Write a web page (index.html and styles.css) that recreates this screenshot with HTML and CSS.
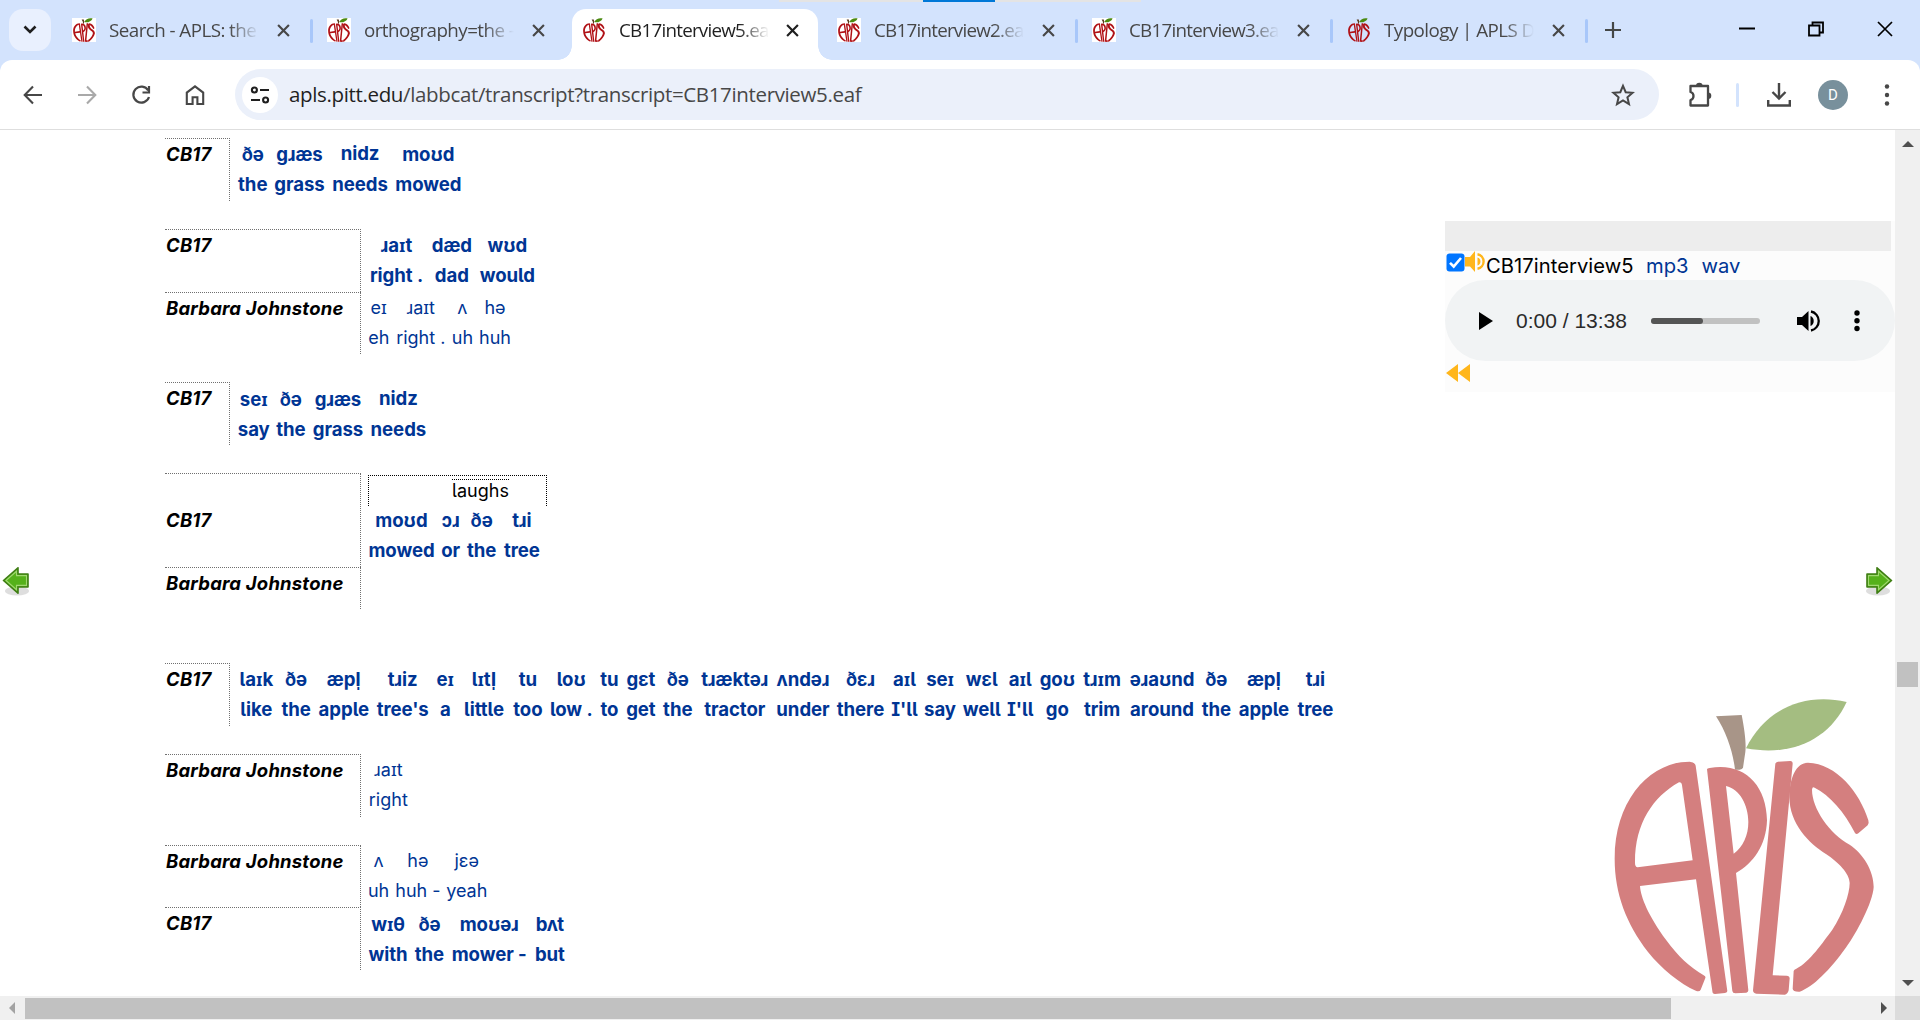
FILE: index.html
```html
<!DOCTYPE html>
<html lang="en">
<head>
<meta charset="utf-8">
<title>CB17interview5.eaf</title>
<link rel="stylesheet" href="styles.css">
</head>
<body>
<svg class="defs" width="0" height="0">
  <symbol id="apls" viewBox="70 50 786 897" preserveAspectRatio="none">
    <path class="stem" d="M379 108L456 104C465 150 470 190 467 215L460 262Q458 267 450 268L436 268C430 215 410 155 379 108Z"/>
    <path class="leaf" d="M469 204C525 90 640 35 771 65C720 175 610 230 469 204Z"/>
    <path class="fruit" fill-rule="evenodd" d="M300 244Q316 246 318 256L413 932Q413 937 406 938L376 941Q368 941 368 932L319 597L151 617C153 650 175 705 230 780C265 828 300 860 342 885Q349 888 347 893L333 928Q330 935 320 932C270 910 215 865 175 815C110 730 75 640 75 535C75 360 180 244 300 244ZM268 306C190 350 135 430 136 548Q136 560 144 561L309 540L277 315Q276 305 268 306Z"/>
    <path class="fruit" fill-rule="evenodd" d="M352 267Q352 264 360 263C460 245 530 310 532 420C530 495 490 550 439 578L476 930Q476 936 470 937L437 939Q429 939 428 932ZM409 317L432 520C460 500 476 465 476 425C476 375 450 325 409 317Z"/>
    <path class="fruit" d="M557 250Q558 245 565 244L602 242Q609 242 609 250L549 885L592 886Q600 887 600 893L597 930Q594 942 585 943L500 940Q490 939 490 930Z"/>
    <path class="fruit" d="M655 247C740 250 810 335 836 420Q839 430 834 435L806 459Q800 464 796 458C765 395 720 345 675 322Q668 318 667 328C667 385 720 460 780 493C820 520 852 570 852 620C850 665 800 760 770 800C720 870 670 920 630 934Q610 935 609 925L612 872Q613 867 620 865C660 845 700 785 728 748C760 700 780 640 780 608C780 580 745 545 710 522C655 487 600 430 599 350C600 290 620 247 655 247Z"/>
  </symbol>
  <symbol id="close" viewBox="0 0 12 12"><path d="M1 1L11 11M11 1L1 11" fill="none" stroke="currentColor" stroke-width="2"/></symbol>
  <symbol id="arrow" viewBox="0 0 28 30">
    <ellipse cx="15" cy="24" rx="12" ry="4.5" fill="#000" opacity=".13"/>
    <path d="M1.500 13.500L16 0.800V7H26V20H16V26.200Z" fill="#55b11a" stroke="#3f7d14" stroke-width="1.6" stroke-linejoin="round"/>
    <path d="M4 13.500L14.500 4.300V8.600H24.500V18.400H14.500V22.700Z" fill="none" stroke="#a0d870" stroke-width="1.1"/>
  </symbol>
</svg>

<header class="tabstrip">
  <div class="search-tabs"><svg width="14" height="10" viewBox="0 0 14 10"><path d="M1.5 1.5L7 7L12.5 1.5" fill="none" stroke="#1f1f1f" stroke-width="2.6"/></svg></div>
  <div class="tab first"><span class="fav boxed"><svg><use href="#apls"/></svg></span><span class="title">Search - APLS: the .</span><svg class="x"><use href="#close"/></svg></div>
  <div class="tab"><span class="fav boxed"><svg><use href="#apls"/></svg></span><span class="title">orthography=the -</span><svg class="x"><use href="#close"/></svg></div>
  <div class="tab active"><span class="fav"><svg><use href="#apls"/></svg></span><span class="title tight">CB17interview5.eaf</span><svg class="x"><use href="#close"/></svg></div>
  <div class="tab divided"><span class="fav boxed"><svg><use href="#apls"/></svg></span><span class="title tight">CB17interview2.eaf</span><svg class="x"><use href="#close"/></svg></div>
  <div class="tab divided"><span class="fav boxed"><svg><use href="#apls"/></svg></span><span class="title tight">CB17interview3.eaf</span><svg class="x"><use href="#close"/></svg></div>
  <div class="tab divided"><span class="fav"><svg><use href="#apls"/></svg></span><span class="title">Typology | APLS Do</span><svg class="x"><use href="#close"/></svg></div>
  <svg class="plus" width="16" height="16" viewBox="0 0 16 16"><path d="M8 0V16M0 8H16" stroke="#444746" stroke-width="2.2"/></svg>
  <div class="window-buttons">
    <svg width="16" height="16" viewBox="0 0 16 16"><path d="M0 7.5H16" stroke="#000" stroke-width="2"/></svg>
    <svg width="16" height="16" viewBox="0 0 16 16"><path d="M1 4.5H11.5V14.5H1ZM4.5 4V1.5H15V11.5H12" fill="none" stroke="#000" stroke-width="1.8"/></svg>
    <svg width="16" height="16" viewBox="0 0 16 16"><path d="M1 1L15 15M15 1L1 15" stroke="#000" stroke-width="1.7"/></svg>
  </div>
  <div class="share-bar"><i></i></div>
</header>

<nav class="toolbar">
  <svg class="tool" viewBox="0 0 20 20"><path d="M19 10H2M10 1.5L1.7 10L10 18.5" fill="none" stroke="#474747" stroke-width="2.1"/></svg>
  <svg class="tool" viewBox="0 0 20 20"><path d="M1 10H18M10 1.5L18.3 10L10 18.5" fill="none" stroke="#a9a9a9" stroke-width="2.1"/></svg>
  <svg class="tool" viewBox="0 0 20 20"><path d="M17.2 5.5A8 8 0 1 0 18 12M18 1V7.5H11.5" fill="none" stroke="#474747" stroke-width="2.2"/></svg>
  <svg class="tool" viewBox="0 0 20 20"><path d="M1.8 19V7.6L10 1.4L18.2 7.6V19H12.4V12.2H7.6V19Z" fill="none" stroke="#474747" stroke-width="2.1"/></svg>
  <div class="omnibox">
    <span class="site"><svg width="20" height="18" viewBox="0 0 20 18"><g fill="none" stroke="#1f1f1f" stroke-width="2.1"><circle cx="4.4" cy="4" r="2.5"/><path d="M10 4H19M1 14H10"/><circle cx="15.6" cy="14" r="2.5"/></g></svg></span>
    <span class="url"><b>apls.pitt.edu</b>/labbcat/transcript?transcript=CB17interview5.eaf</span>
    <svg class="star" width="24" height="24" viewBox="0 0 24 24"><path d="M12 2.8L14.7 9.2L21.6 9.8L16.4 14.3L18 21.1L12 17.5L6 21.1L7.6 14.3L2.4 9.8L9.3 9.2Z" fill="none" stroke="#474747" stroke-width="2"/></svg>
  </div>
  <svg class="ext" width="28" height="28" viewBox="0 0 28 28"><path d="M4.5 5H22V24.5H4.5V19C8.5 18 8.5 12 4.5 11Z" fill="none" stroke="#474747" stroke-width="2.3" stroke-linejoin="round"/><path d="M10 5A3.3 3.3 0 0 1 16.600 5ZM22 11.500A3.300 3.300 0 0 1 22 18.100Z" fill="#474747"/></svg>
  <i class="sep"></i>
  <svg class="download" width="26" height="26" viewBox="0 0 26 26"><path d="M13 1V16M6.500 10L13 16.500L19.500 10M2.200 18V23.500H23.800V18" fill="none" stroke="#474747" stroke-width="2.4"/></svg>
  <span class="avatar">D</span>
  <svg class="menu" width="6" height="24" viewBox="0 0 6 24"><g fill="#474747"><circle cx="3" cy="3.500" r="2.200"/><circle cx="3" cy="12" r="2.200"/><circle cx="3" cy="20.500" r="2.200"/></g></svg>
</nav>

<div class="frame">
<main class="page">
  <section class="transcript">
    <div class="utterance narrow">
      <div class="turn loud"><div class="speaker">CB17</div><div class="words">
        <div style="width:35.5px"><i>ðə</i><b>the</b></div><div style="width:58px"><i>ɡɹæs</i><b>grass</b></div><div style="width:63.2px"><i class="up">nidz</i><b>needs</b></div><div style="width:73.3px"><i>moʊd</i><b>mowed</b></div>
      </div></div>
    </div>
    <div class="utterance">
      <div class="turn loud"><div class="speaker">CB17</div><div class="words">
        <div style="width:63px"><i>ɹaɪt</i><b>right .</b></div><div style="width:47.7px"><i>dæd</i><b>dad</b></div><div style="width:63.3px"><i>wʊd</i><b>would</b></div>
      </div></div>
      <div class="turn"><div class="speaker">Barbara Johnstone</div><div class="words">
        <div style="width:27.5px"><i>eɪ</i><b>eh</b></div><div style="width:56.5px"><i>ɹaɪt</i><b>right .</b></div><div style="width:26.8px"><i>ʌ</i><b>uh</b></div><div style="width:38.5px"><i>hə</i><b>huh</b></div>
      </div></div>
    </div>
    <div class="utterance narrow">
      <div class="turn loud"><div class="speaker">CB17</div><div class="words">
        <div style="width:37.5px"><i>seɪ</i><b>say</b></div><div style="width:36.7px"><i>ðə</i><b>the</b></div><div style="width:57.6px"><i>ɡɹæs</i><b>grass</b></div><div style="width:63.2px"><i class="up">nidz</i><b>needs</b></div>
      </div></div>
    </div>
    <div class="utterance">
      <div class="turn loud tall"><div class="speaker">CB17</div><div>
        <div class="noise"><span>laughs</span></div>
        <div class="words">
          <div style="width:73px"><i>moʊd</i><b>mowed</b></div><div style="width:25.3px"><i>ɔɹ</i><b>or</b></div><div style="width:36.7px"><i>ðə</i><b>the</b></div><div style="width:43.7px"><i>tɹi</i><b>tree</b></div>
        </div>
      </div></div>
      <div class="turn empty"><div class="speaker">Barbara Johnstone</div><div class="words"></div></div>
    </div>
    <div class="utterance narrow">
      <div class="turn loud"><div class="speaker">CB17</div><div class="words">
        <div style="width:42.7px"><i>laɪk</i><b>like</b></div><div style="width:36.8px"><i>ðə</i><b>the</b></div><div style="width:58.7px"><i>æpl̩</i><b>apple</b></div><div style="width:59.1px"><i>tɹiz</i><b>tree's</b></div><div style="width:26.1px"><i>eɪ</i><b>a</b></div><div style="width:51.2px"><i>lɪtl̩</i><b>little</b></div><div style="width:36.7px"><i>tu</i><b>too</b></div><div style="width:50.1px"><i>loʊ</i><b>low .</b></div><div style="width:26.1px"><i>tu</i><b>to</b></div><div style="width:36.9px"><i>ɡɛt</i><b>get</b></div><div style="width:36.9px"><i>ðə</i><b>the</b></div><div style="width:77.1px"><i>tɹæktəɹ</i><b>tractor</b></div><div style="width:59.4px"><i>ʌndəɹ</i><b>under</b></div><div style="width:55.5px"><i>ðɛɹ</i><b>there</b></div><div style="width:32.5px"><i>aɪl</i><b>I'll</b></div><div style="width:38.7px"><i>seɪ</i><b>say</b></div><div style="width:44.7px"><i>wɛl</i><b>well</b></div><div style="width:32.3px"><i>aɪl</i><b>I'll</b></div><div style="width:42px"><i>ɡoʊ</i><b>go</b></div><div style="width:47.5px"><i>tɹɪm</i><b>trim</b></div><div style="width:72.4px"><i>əɹaʊnd</i><b>around</b></div><div style="width:36.2px"><i>ðə</i><b>the</b></div><div style="width:59px"><i>æpl̩</i><b>apple</b></div><div style="width:44px"><i>tɹi</i><b>tree</b></div>
      </div></div>
    </div>
    <div class="utterance">
      <div class="turn"><div class="speaker">Barbara Johnstone</div><div class="words">
        <div style="width:46.6px"><i>ɹaɪt</i><b>right</b></div>
      </div></div>
    </div>
    <div class="utterance">
      <div class="turn"><div class="speaker">Barbara Johnstone</div><div class="words">
        <div style="width:27.2px"><i>ʌ</i><b>uh</b></div><div style="width:51.4px"><i>hə</i><b>huh -</b></div><div style="width:46.4px"><i>jɛə</i><b>yeah</b></div>
      </div></div>
      <div class="turn loud"><div class="speaker">CB17</div><div class="words">
        <div style="width:46.2px"><i>wɪθ</i><b>with</b></div><div style="width:36.5px"><i>ðə</i><b>the</b></div><div style="width:83.1px"><i>moʊəɹ</i><b>mower -</b></div><div style="width:38.2px"><i>bʌt</i><b>but</b></div>
      </div></div>
    </div>
  </section>

  <aside class="media">
    <div class="grip"></div>
    <div class="source">
      <svg width="19" height="19" viewBox="0 0 19 19"><rect x=".5" y=".5" width="18" height="18" rx="3" fill="#0075ff"/><path d="M4 9.800L7.700 13.500L15 5" fill="none" stroke="#fff" stroke-width="2.600"/></svg>
      <svg class="speaker-icon" width="21" height="21" viewBox="0 0 21 21"><g fill="#ffb61c"><path d="M0 6H5L10 0V21L5 15.500H0Z"/><path d="M12.500 6.500A4.200 4.200 0 0 1 12.500 14.500Z"/></g><path d="M12.500 3.300A7.300 7.300 0 0 1 12.500 17.700" fill="none" stroke="#ffb61c" stroke-width="2.400"/></svg>
      <span class="name">CB17interview5</span><a>mp3</a><a>wav</a>
    </div>
    <div class="player">
      <svg class="play" width="14" height="18" viewBox="0 0 14 18"><path d="M0 0L14 9L0 18Z"/></svg>
      <span class="time">0:00 / 13:38</span>
      <div class="track"><i></i></div>
      <svg class="volume" width="23" height="22" viewBox="0 0 23 22"><path d="M0 7H5L11.500 1V21L5 15H0ZM13.500 6A5.500 5.500 0 0 1 13.500 16Z"/><path d="M14 1.500A9.700 9.700 0 0 1 14 20.500" fill="none" stroke="#000" stroke-width="2.300"/></svg>
      <svg width="6" height="22" viewBox="0 0 6 22"><circle cx="3" cy="3" r="2.700"/><circle cx="3" cy="10.700" r="2.700"/><circle cx="3" cy="18.500" r="2.700"/></svg>
    </div>
    <svg class="rewind" width="24" height="18" viewBox="0 0 24 18"><path d="M12 0V18L0 9ZM24 0V18L12 9Z" fill="#ffb61c"/></svg>
  </aside>

  <svg class="nav prev"><use href="#arrow"/></svg>
  <svg class="nav next"><use href="#arrow"/></svg>
  <svg class="watermark"><use href="#apls"/></svg>
</main>
<div class="vbar">
  <svg width="12" height="6" viewBox="0 0 12 6"><path d="M0 6L6 0L12 6Z" fill="#505050"/></svg>
  <i></i>
  <svg width="12" height="6" viewBox="0 0 12 6"><path d="M0 0L6 6L12 0Z" fill="#505050"/></svg>
</div>
<div class="hbar">
  <svg width="6" height="12" viewBox="0 0 6 12"><path d="M6 0L0 6L6 12Z" fill="#a3a3a3"/></svg>
  <i></i>
  <svg width="6" height="12" viewBox="0 0 6 12"><path d="M0 0L6 6L0 12Z" fill="#505050"/></svg>
</div>
<div class="corner"></div>
</div>
</body>
</html>
```
FILE: styles.css
```css
* { box-sizing: border-box; }
body { margin: 0; width: 1920px; height: 1020px; overflow: hidden; display: flex; flex-direction: column; background: #d3e3fd; font-family: Inter, "Noto Sans", sans-serif; }
svg { display: block; flex: none; }
.defs { position: absolute; }
.stem { fill: var(--stem, #5a3a20); }
.leaf { fill: var(--leaf, #4a8a10); }
.fruit { fill: var(--fruit, #b01116); }

/* tab strip */
.tabstrip { position: relative; height: 60px; flex: none; display: flex; padding: 9px 0 0 9px; font: 18.8px "Open Sans", "Noto Sans", sans-serif; color: #474747; }
.search-tabs { width: 42px; height: 42px; border-radius: 14px; background: #e9f0fe; display: flex; align-items: center; justify-content: center; }
.tab { position: relative; width: 255px; height: 51px; display: flex; align-items: center; padding: 0 26px 9px 11px; }
.tab.first { margin-left: 10px; }
.tab.first::after, .tab.divided::after { content: ""; position: absolute; right: 3px; top: 10px; width: 3px; height: 24px; border-radius: 2px; background: #a8c7fa; }
.fav { width: 24px; height: 24px; flex: none; display: flex; }
.fav.boxed { background: #fff; }
.fav svg { width: 22px; height: 24px; margin-left: 1px; }
.title { width: 151px; margin-left: 13px; overflow: hidden; white-space: nowrap; letter-spacing: -.55px; line-height: 28px; -webkit-mask-image: linear-gradient(90deg, #000 120px, transparent 150px); mask-image: linear-gradient(90deg, #000 120px, transparent 150px); }
.title.tight { letter-spacing: -.75px; }
.x { width: 13px; height: 13px; margin-left: auto; }
.tab.active { background: #fff; border-radius: 14px 14px 0 0; margin: 0 8px 0 1px; width: 246px; padding-left: 10px; padding-right: 19px; color: #1f1f1f; }
.tab.active::before, .tab.active::after { content: ""; position: absolute; bottom: 0; width: 14px; height: 14px; }
.tab.active::before { left: -14px; background: radial-gradient(circle at 0 0, transparent 13.5px, #fff 14px); }
.tab.active::after { right: -14px; background: radial-gradient(circle at 100% 0, transparent 13.5px, #fff 14px); }
.plus { margin: 13px 0 0 14px; }
.window-buttons { display: flex; gap: 53px; margin: 12px 27px 0 auto; }
.share-bar { position: absolute; left: 779px; top: 0; width: 362px; height: 2px; background: #e4e4e4; }
.share-bar i { display: block; width: 72px; height: 2px; margin-left: 144px; background: #0078d7; }

/* toolbar */
.toolbar { height: 70px; flex: none; display: flex; align-items: center; padding-left: 23px; background: #fff; border-bottom: 1px solid #dedede; border-radius: 12px 12px 0 0; }
.tool { width: 20px; height: 20px; margin-right: 34px; }
.omnibox { margin-left: -4px; width: 1424px; height: 51px; border-radius: 26px; background: #ebf0fa; display: flex; align-items: center; padding: 0 24px 0 7px; }
.site { width: 36px; height: 36px; border-radius: 50%; background: #fff; display: flex; align-items: center; justify-content: center; }
.url { margin: 0 0 2px 11px; font: 20.5px "Open Sans", "Noto Sans", sans-serif; letter-spacing: -.35px; color: #474747; }
.url b { font-weight: 400; color: #1f1f1f; }
.star { margin-left: auto; }
.ext { margin-left: 27px; }
.sep { width: 3px; height: 24px; margin-left: 22px; border-radius: 2px; background: #d3e3fd; }
.download { margin-left: 27px; }
.avatar { width: 30px; height: 30px; margin-left: 26px; border-radius: 50%; background: #78909c; color: #fff; font: 15px/30px Roboto, sans-serif; text-align: center; }
.menu { margin-left: 36px; }

/* page and scroll bars */
.frame { flex: 1; min-height: 0; display: grid; grid-template: 1fr 24px / 1fr 25px; background: #fff; }
.page { position: relative; overflow: hidden; display: flex; font-size: 18px; }
.vbar, .hbar { background: #f0f0f0; display: flex; align-items: center; }
.vbar { flex-direction: column; padding: 11px 0 10px; }
.vbar i { width: 21px; height: 25px; background: #c1c1c1; margin: 515px 0 auto; }
.hbar { padding: 0 8px 0 9px; }
.hbar i { width: 1646px; height: 21px; background: #c1c1c1; margin: 0 auto 0 10px; }
.corner { background: #dcdcdc; }

/* transcript */
.transcript { width: 1445px; flex: none; padding: 8px 0 0 165px; display: flex; flex-direction: column; gap: 28.2px; }
.turn { display: flex; height: 62.7px; }
.speaker { width: 196px; flex: none; margin-right: 4px; border-top: 1px dotted #707070; border-right: 1px dotted #707070; padding-left: 1px; font-size: 18.5px; font-weight: 700; font-style: italic; line-height: 31px; color: #000; white-space: nowrap; font-feature-settings: "cv05"; letter-spacing: .2px; }
.narrow .speaker { width: 65px; margin-right: 5px; }
.words { display: flex; padding-top: 1.3px; color: #003594; font-feature-settings: "cv05", "cv08"; }
.words > div { display: flex; flex-direction: column; align-items: center; flex: none; }
.words i, .words b { font-style: normal; font-weight: inherit; line-height: 30px; white-space: nowrap; }
.words i.up { transform: translateY(-1px); }
.loud .words { font-size: 18.6px; font-weight: 700; letter-spacing: -.05px; }
.tall { height: 94px; }
.tall .speaker { padding-top: 31px; }
.noise { width: 179px; height: 31px; margin: 2px 0 0 3px; border: 1px dotted #000; border-bottom: 0; display: flex; padding: 3px 0 0 83px; }
.noise span { border-top: 1px dotted #000; height: 26px; line-height: 21px; font-feature-settings: "cv05"; }
.tall .words { padding-top: 0; margin-top: -1.5px; }
.empty { height: 42px; margin-bottom: 25.500px; }

/* media panel */
.media { width: 450px; height: 171px; margin-top: 91px; background: #fcfcfc; }
.grip { width: 446px; height: 30px; background: #ededed; }
.source { display: flex; height: 29px; padding: 2px 0 0 1px; }
.speaker-icon { margin-top: -2px; }
.source span, .source a { font-size: 20.2px; line-height: 25px; font-feature-settings: "cv05"; }
.source .name { letter-spacing: .05px; color: #000; width: 147px; }
.source a { margin-left: 13px; color: #003594; }
.player { height: 81px; border-radius: 41px; background: #f1f3f4; display: flex; align-items: center; padding-left: 34px; }
.time { width: 135px; margin-left: 23px; font: 21px "Liberation Sans", sans-serif; color: #2a2a2a; }
.track { width: 109px; height: 6px; border-radius: 3px; background: #c1c1c1; }
.track i { display: block; width: 52px; height: 6px; border-radius: 3px; background: #555; }
.volume { margin: 0 34px 0 37px; }
.rewind { margin: 3px 0 0 1px; }

/* floating over the page */
.nav { position: absolute; top: 437px; width: 28px; height: 30px; }
.prev { left: 2px; }
.next { right: 2px; transform: scaleX(-1); }
.watermark { position: absolute; left: 1613px; top: 567px; width: 262px; height: 299px; --fruit: #d47f7f; --leaf: #a4bd81; --stem: #a89588; }
```
